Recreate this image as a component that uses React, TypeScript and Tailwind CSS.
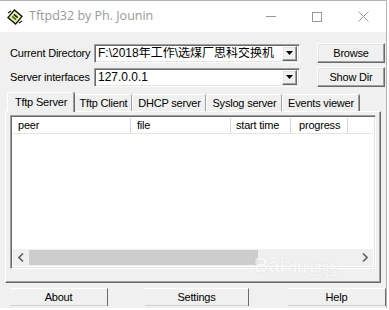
const raised =
  "border border-t-white border-l-white border-r-[#696969] border-b-[#696969] shadow-[inset_-1px_-1px_0_#a0a0a0,inset_1px_1px_0_#e3e3e3] bg-[#f0f0f0]";
const sunken =
  "border border-t-[#a0a0a0] border-l-[#a0a0a0] border-r-white border-b-white shadow-[inset_1px_1px_0_#696969,inset_-1px_-1px_0_#e3e3e3] bg-white";

function AppIcon() {
  return (
    <svg width="16" height="16" viewBox="0 0 16 16">
      <rect x="3" y="3" width="10" height="10" transform="rotate(40 8 8)" fill="#e8f0a0" stroke="#1a1a1a" strokeWidth="1.4" />
      <rect x="5.5" y="6" width="5" height="1.6" transform="rotate(40 8 8)" fill="#1a1a1a" />
      <rect x="5.5" y="8.6" width="5" height="1.6" transform="rotate(40 8 8)" fill="#2f6a1f" />
      <path d="M1 4 L4 2 M12 14 L15 12" stroke="#1a1a1a" strokeWidth="1.2" />
    </svg>
  );
}

function Combo({ value }: { value: string }) {
  return (
    <div className={`${sunken} w-[206px] h-[19px] flex items-center pl-[3px] pr-[2px]`}>
      <span className="flex-1 text-[12px] leading-none whitespace-nowrap overflow-hidden tracking-normal font-['Liberation_Sans','Noto_Sans_CJK_SC',sans-serif]">
        {value}
      </span>
      <div className={`${raised} w-[15px] h-[15px] flex items-center justify-center`}>
        <svg width="7" height="4" viewBox="0 0 7 4">
          <path d="M0 0 H7 L3.5 4 Z" fill="#000" />
        </svg>
      </div>
    </div>
  );
}

function Tab({ label, w, active }: { label: string; w: string; active?: boolean }) {
  return (
    <div
      className={`${w} flex items-center justify-center border-t border-l border-white shadow-[inset_-1px_0_0_#a0a0a0,1px_0_0_#696969] rounded-t-[2px] whitespace-nowrap ${
        active ? "h-[20px] -mb-px z-10 bg-[#f0f0f0]" : "h-[17px]"
      }`}
    >
      {label}
    </div>
  );
}

export default function App() {
  return (
    <div className="w-[389px] h-[310px] bg-white overflow-hidden relative font-['Liberation_Sans',Arial,sans-serif] text-[11px] tracking-[-0.2px] text-black">
      <div className="w-[387px] h-[308px] border-t border-r border-[#b4b4b4] flex flex-col">
        <div className="h-[31px] bg-white flex items-center shrink-0">
          <div className="ml-[7px]">
            <AppIcon />
          </div>
          <span className="ml-[6px] text-[12.5px] tracking-normal text-[#9a9a9a] font-['Open_Sans',sans-serif]">
            Tftpd32 by Ph. Jounin
          </span>
          <div className="ml-auto flex h-full">
            <div className="w-[46px] flex items-center justify-center">
              <div className="w-[10px] h-px bg-[#999]" />
            </div>
            <div className="w-[46px] flex items-center justify-center">
              <div className="w-[10px] h-[10px] border border-[#999]" />
            </div>
            <div className="w-[46px] flex items-center justify-center">
              <svg width="11" height="11" viewBox="0 0 11 11">
                <path d="M0.5 0.5 L10.5 10.5 M10.5 0.5 L0.5 10.5" stroke="#999" strokeWidth="1" />
              </svg>
            </div>
          </div>
        </div>

        <div className="flex-1 bg-[#f0f0f0] flex flex-col pt-[11px]">
          <div className="flex items-center h-[20px] pl-[10px]">
            <span className="w-[84px] whitespace-nowrap">Current Directory</span>
            <Combo value="F:\2018年工作\选煤厂思科交换机" />
            <button className={`${raised} ml-[17px] w-[68px] h-[20px] text-[11px]`}>Browse</button>
          </div>
          <div className="flex items-center h-[20px] pl-[10px] mt-[4px]">
            <span className="w-[84px] whitespace-nowrap">Server interfaces</span>
            <Combo value="127.0.0.1" />
            <button className={`${raised} ml-[17px] w-[68px] h-[20px] text-[11px]`}>Show Dir</button>
          </div>

          <div className="flex items-end pl-[7px] mt-[5px] h-[19px]">
            <Tab label="Tftp Server" w="w-[67px]" active />
            <Tab label="Tftp Client" w="w-[58px]" />
            <Tab label="DHCP server" w="w-[74px]" />
            <Tab label="Syslog server" w="w-[76px]" />
            <Tab label="Events viewer" w="w-[77px]" />
          </div>

          <div className="mx-[5px] h-[172px] border-t border-l border-white border-r border-r-[#696969] border-b border-b-[#696969] shadow-[inset_-1px_-1px_0_#a0a0a0] px-[4px] pt-[3px]">
            <div className={`${sunken} h-[154px] flex flex-col`}>
              <div className="flex h-[16px] bg-white shrink-0 border-b border-[#e5e5e5] mx-[2px] mt-[2px]">
                <div className="w-[118px] pl-[5px] border-r border-[#d5d5d5] leading-[15px]">peer</div>
                <div className="w-[100px] pl-[6px] border-r border-[#d5d5d5] leading-[15px]">file</div>
                <div className="w-[60px] pl-[5px] border-r border-[#d5d5d5] leading-[15px]">start time</div>
                <div className="w-[57px] pl-[8px] border-r border-[#d5d5d5] leading-[15px]">progress</div>
                <div className="flex-1" />
              </div>
              <div className="flex-1" />
              <div className="h-[17px] mx-[2px] mb-[2px] flex items-center bg-[#f0f0f0]">
                <div className="w-[16px] flex items-center justify-center">
                  <svg width="6" height="9" viewBox="0 0 6 9">
                    <path d="M5 0.5 L1 4.5 L5 8.5" stroke="#606060" strokeWidth="1.6" fill="none" />
                  </svg>
                </div>
                <div className="w-[229px] h-[15px] bg-[#cdcdcd]" />
                <div className="flex-1" />
                <div className="w-[16px] flex items-center justify-center">
                  <svg width="6" height="9" viewBox="0 0 6 9">
                    <path d="M1 0.5 L5 4.5 L1 8.5" stroke="#606060" strokeWidth="1.6" fill="none" />
                  </svg>
                </div>
              </div>
            </div>
          </div>

          <div className="flex items-center h-[18px] mt-[5px] pl-[10px]">
            <button className="w-[98px] h-[18px] border-t border-white border-r border-r-[#696969] shadow-[inset_0_-1px_0_#d0d0d0] text-[11px]">About</button>
            <button className="ml-[37px] w-[104px] h-[18px] border-t border-white border-r border-r-[#696969] shadow-[inset_0_-1px_0_#d0d0d0] text-[11px]">Settings</button>
            <button className="ml-[39px] w-[98px] h-[18px] border-t border-white border-r border-r-[#696969] shadow-[inset_0_-1px_0_#d0d0d0] text-[11px]">Help</button>
          </div>
        </div>
      </div>

      <div className="absolute left-[254px] top-[250px] flex items-end gap-[2px] text-white opacity-50 [text-shadow:0_0_1px_#b0b0b0] pointer-events-none">
        <span className="text-[20px] font-bold tracking-normal">Bai</span>
        <span className="text-[16px] font-bold tracking-normal">du</span>
        <span className="text-[14px] font-bold tracking-normal font-['Noto_Sans_CJK_SC',sans-serif]">经验</span>
      </div>
    </div>
  );
}
